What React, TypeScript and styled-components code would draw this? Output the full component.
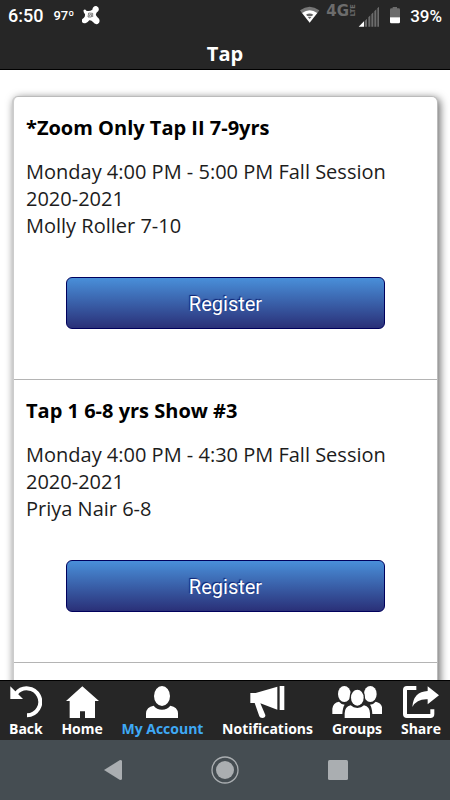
import React from "react";
import styled, { createGlobalStyle } from "styled-components";

const GlobalStyle = createGlobalStyle`
  * { box-sizing: border-box; }
  body { margin: 0; background: #fff; color: #000; font-family: "Open Sans", sans-serif; }
`;

const Screen = styled.div`
  display: flex;
  flex-direction: column;
  height: 100vh;
`;

const Top = styled.header`
  flex: none;
  background: #262626;
  color: #fff;
  border-bottom: 1px solid #000;
`;

const StatusBar = styled.div`
  display: flex;
  justify-content: space-between;
  height: 38px;
  padding: 0 8px;
  font-family: Roboto, sans-serif;
  font-size: 18px;
  font-weight: 500;
  line-height: 32px;
`;

const StatusGroup = styled.div`
  display: flex;
  align-items: flex-start;
`;

const Temperature = styled.span`
  margin: 0 8px 0 10px;
  font-size: 13px;
`;

const BatteryLevel = styled.span`
  font-size: 17px;
`;

const StatusIcons = styled.svg`
  display: block;
  height: 32px;
`;

const PageTitle = styled.h1`
  margin: 0;
  height: 31px;
  font-size: 20px;
  line-height: 31px;
  text-align: center;
`;

const Content = styled.main`
  flex: 1;
  min-height: 0;
  overflow-y: auto;
  scrollbar-width: none;
  padding: 26px 12px;
`;

const ClassList = styled.div`
  border: 1px solid #bbb;
  border-left: 2px solid #ccc;
  border-radius: 6px;
  background: #fff;
  box-shadow: 2px 2px 8px rgba(0, 0, 0, 0.6);
`;

const ClassItem = styled.section`
  display: flex;
  flex-direction: column;
  padding: 17px 12px 50px;
  border-bottom: 1px solid #b4b4b4;
  font-size: 20px;
  line-height: 27px;
`;

const ClassName = styled.h2`
  margin: 0 0 17px;
  font-size: 20px;
  line-height: 27px;
  font-weight: 700;
`;

const Details = styled.p`
  margin: 0;
  color: #1c1c1c;
`;

const RegisterButton = styled.button`
  align-self: center;
  width: 80%;
  height: 52px;
  margin-top: 38px;
  padding: 2px 0 0;
  border: 1px solid #00005c;
  border-radius: 6px;
  background: linear-gradient(#498fd9, #2a3078);
  color: #fff;
  font-family: Roboto, sans-serif;
  font-size: 20px;
  text-shadow: -1px -1px 1px #0b2070;
`;

const TabBar = styled.nav`
  flex: none;
  display: flex;
  justify-content: space-between;
  height: 60px;
  padding: 5px 9px 0;
  background: #262626;
  border-top: 1px solid #000;
`;

const Tab = styled.a<{ $active?: boolean }>`
  display: flex;
  flex-direction: column;
  align-items: center;
  color: ${(p) => (p.$active ? "#3fa9f5" : "#fff")};
  font-size: 14px;
  font-weight: 700;
  line-height: 22px;
  text-decoration: none;
  white-space: nowrap;
`;

const TabIcon = styled.svg`
  display: block;
  height: 32px;
  fill: #fff;
`;

const SystemBar = styled.nav`
  flex: none;
  display: flex;
  justify-content: space-around;
  align-items: center;
  height: 60px;
  padding: 0 12.5%;
  background: #454d52;
`;

const SystemButton = styled.button`
  display: flex;
  justify-content: center;
  width: 32px;
  padding: 0;
  border: 0;
  background: none;
`;

const classes = [
  { name: "*Zoom Only Tap II 7-9yrs", time: "Monday 4:00 PM - 5:00 PM Fall Session 2020-2021", teacher: "Molly Roller 7-10" },
  { name: "Tap 1 6-8 yrs Show #3", time: "Monday 4:00 PM - 4:30 PM Fall Session 2020-2021", teacher: "Priya Nair 6-8" },
];

const tabs = [
  {
    label: "Back",
    box: "30 108 98 96",
    art: (
      <>
        <path d="M31 109L69 147H31Z" />
        <path d="M48 131A40.5 40.5 0 1 1 81 196" fill="none" stroke="#fff" strokeWidth="12" />
      </>
    ),
  },
  {
    label: "Home",
    box: "198 108 99 96",
    art: <path d="M247 109L297 153H285V204H255V184H240V204H209V153H198Z" />,
  },
  {
    label: "My Account",
    active: true,
    box: "441 108 96 96",
    art: (
      <>
        <ellipse cx="489" cy="138" rx="24" ry="30" />
        <path d="M441 204V190Q442 171 464 167Q473 179 489 179Q505 179 514 167Q536 171 537 190V204Z" />
      </>
    ),
  },
  {
    label: "Notifications",
    box: "77 108 104 96",
    art: (
      <>
        <path d="M78 129H94L159 110V179L108 160L123 195Q124 204 114 204Q107 204 105 199L91 159H78Z" />
        <path d="M166 108H180V180H166Z" />
      </>
    ),
  },
  {
    label: "Groups",
    box: "320 108 152 96",
    art: (
      <>
        <ellipse cx="357" cy="132" rx="19" ry="24" />
        <ellipse cx="435" cy="132" rx="19" ry="24" />
        <path d="M321 192V176Q323 158 341 155Q347 163 358 164Q352 172 351 192Z" />
        <path d="M471 192V176Q469 158 451 155Q445 163 434 164Q440 172 441 192Z" />
        <ellipse cx="396" cy="142" rx="23" ry="28" fill="#262626" />
        <ellipse cx="396" cy="143" rx="19" ry="24" />
        <path d="M358 204V190Q358 171 376 166Q384 174 396 174Q408 174 416 166Q434 171 434 190V204Z" />
      </>
    ),
  },
  {
    label: "Share",
    box: "530 108 112 96",
    art: (
      <>
        <path d="M573 114H545Q539 114 539 120V192Q539 198 545 198H615Q621 198 621 192V178" fill="none" stroke="#fff" strokeWidth="12" />
        <path d="M561 171Q564 125 607 123V109L641 136L607 163V148Q575 146 561 171Z" />
      </>
    ),
  },
];

export default function App() {
  return (
    <Screen>
      <GlobalStyle />
      <Top>
        <StatusBar>
          <StatusGroup>
            <span>6:50</span>
            <Temperature>97º</Temperature>
            <StatusIcons viewBox="244 0 54 96" aria-hidden="true">
              <path d="M257 32Q267 35 275 29Q277 17 287 18Q298 22 293 33Q284 40 286 46Q289 51 295 56Q300 67 291 72Q282 74 277 66Q272 60 266 61Q261 67 256 69Q248 72 244 66Q241 58 249 54Q254 50 253 43Q247 36 249 30Q253 26 257 32Z" fill="#fff" />
              <path d="M276 40L264 39L262 51H272L273 44H267V49M276 40V51" fill="none" stroke="#444" strokeWidth="2" />
            </StatusIcons>
          </StatusGroup>
          <StatusGroup>
            <StatusIcons viewBox="30 0 330 96" aria-label="Wi-Fi, 4G LTE, battery">
              <path d="M30 31Q59 10 88 31L82 40Q59 24 36 40Z" fill="#777" />
              <path d="M36 39Q59 23 82 39L59 68Z" fill="#fff" />
              <path d="M48 44Q59 37 70 44L66 48H52ZM53 50H65L59 57Z" fill="#666" />
              <text x="109" y="47" fill="#6c6c6c" fontSize="45" fontWeight="700" fontFamily="DejaVu Sans, sans-serif">4G</text>
              <text transform="translate(194 49) rotate(-90)" fill="#6c6c6c" fontSize="20" fontWeight="700" fontFamily="DejaVu Sans, sans-serif">LTE</text>
              <path d="M224 63L231 56V80H224ZM235 52L241 46V80H235ZM244 43L250 37V80H244ZM253 34L259 28V80H253ZM262 25L267 20V80H262Z" fill="#6c6c6c" />
              <path d="M206 80L222 64V80Z" fill="#fff" />
              <path d="M308 25V21H321V25H326Q330 25 330 29V52H300V29Q300 25 304 25Z" fill="#6c6c6c" />
              <path d="M300 52H330V66Q330 70 326 70H304Q300 70 300 66Z" fill="#fff" />
            </StatusIcons>
            <BatteryLevel>39%</BatteryLevel>
          </StatusGroup>
        </StatusBar>
        <PageTitle>Tap</PageTitle>
      </Top>
      <Content>
        <ClassList>
          {classes.map((c) => (
            <ClassItem key={c.name}>
              <ClassName>{c.name}</ClassName>
              <Details>{c.time}</Details>
              <Details>{c.teacher}</Details>
              <RegisterButton type="button">Register</RegisterButton>
            </ClassItem>
          ))}
          <ClassItem />
        </ClassList>
      </Content>
      <TabBar>
        {tabs.map((t) => (
          <Tab key={t.label} href="#" $active={t.active} aria-current={t.active ? "page" : undefined}>
            <TabIcon viewBox={t.box} aria-hidden="true">{t.art}</TabIcon>
            {t.label}
          </Tab>
        ))}
      </TabBar>
      <SystemBar>
        <SystemButton type="button" aria-label="System back">
          <svg width="18" height="20" viewBox="0 0 18 20"><path d="M0 10L16 0Q18 0 18 1V19Q18 20 16 20Z" fill="#aaaeb1" /></svg>
        </SystemButton>
        <SystemButton type="button" aria-label="System home">
          <svg width="28" height="28" viewBox="0 0 28 28"><circle cx="14" cy="14" r="13" fill="none" stroke="#aaaeb1" strokeWidth="1.3" /><circle cx="14" cy="14" r="9" fill="#aaaeb1" /></svg>
        </SystemButton>
        <SystemButton type="button" aria-label="Recent apps">
          <svg width="20" height="20" viewBox="0 0 20 20"><rect width="20" height="20" rx="1.5" fill="#aaaeb1" /></svg>
        </SystemButton>
      </SystemBar>
    </Screen>
  );
}
